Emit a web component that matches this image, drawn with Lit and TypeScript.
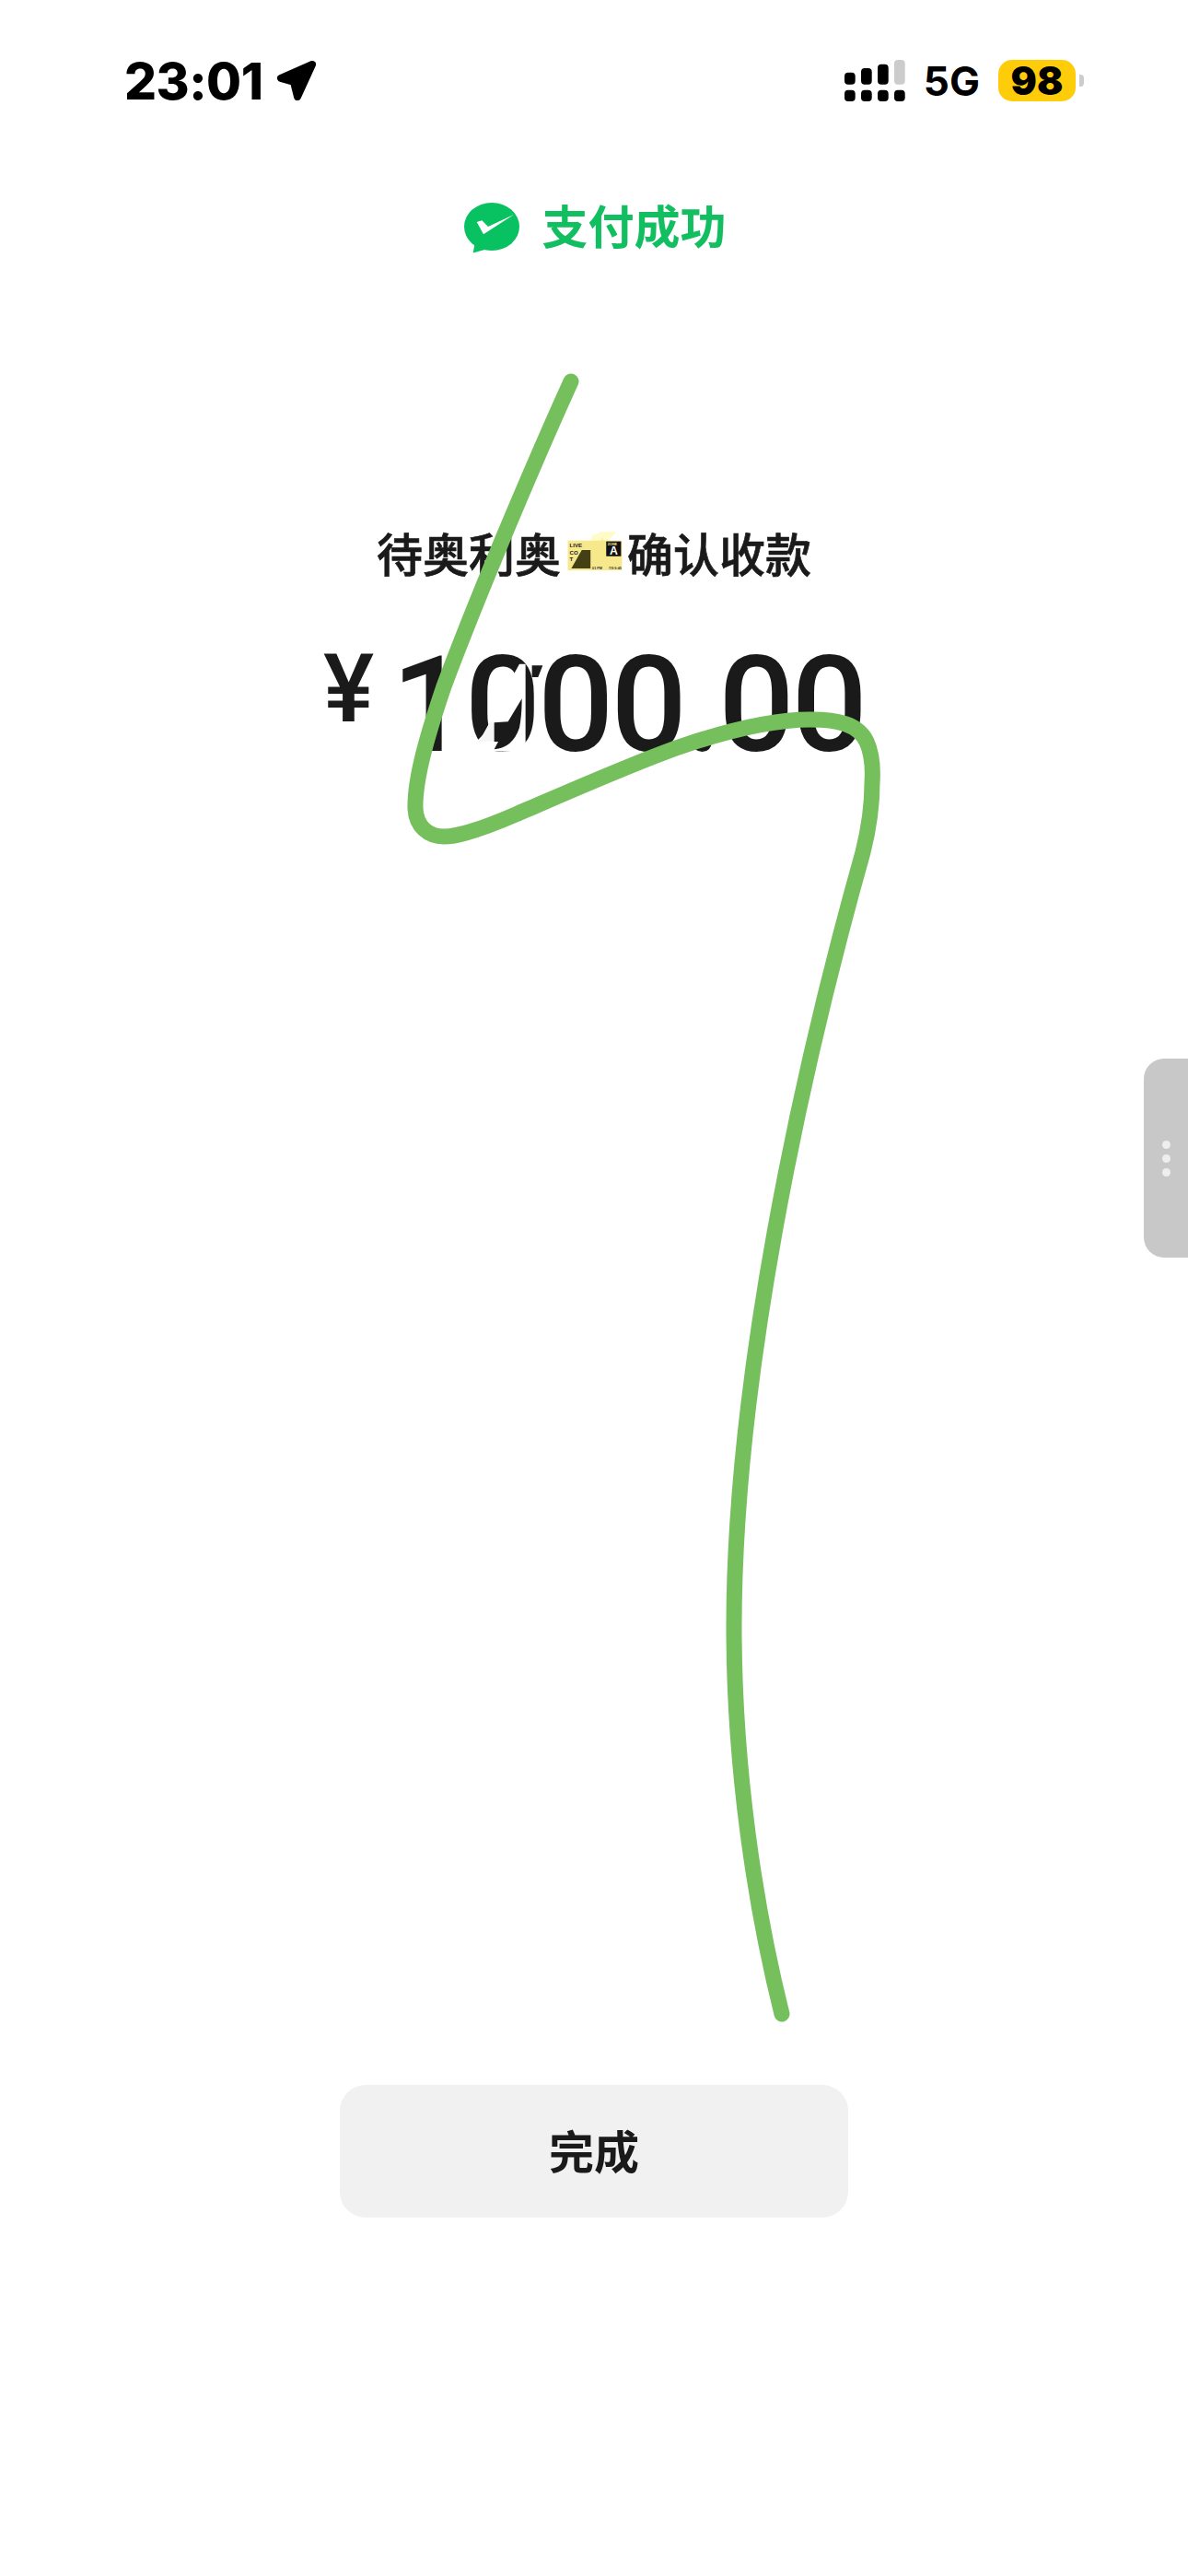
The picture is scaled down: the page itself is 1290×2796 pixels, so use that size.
import { LitElement, html, css, svg } from "lit";
import { customElement } from "lit/decorators.js";

const STROKE_PATH =
  "M620 414C590 480 525 630 482 745C465 795 450 845 451 878C452 897 465 908 482 908" +
  "C500 908 530 897 560 884C600 867 690 827 740 810C790 793 840 781 880 781" +
  "C910 781 932 786 941 805C947 818 948 835 947 850C947 875 944 897 937 925" +
  "C868 1170 797 1500 797 1766C797 1920 820 2070 849 2186";

@customElement("app-root")
export class AppRoot extends LitElement {
  static styles = css`
    :host {
      display: block;
      position: relative;
      width: 1290px;
      height: 2796px;
      background: #fff;
      overflow: hidden;
      font-family: "Noto Sans CJK SC", "Noto Sans", sans-serif;
      color: #1a1a1a;
    }
    .status {
      height: 176px;
      display: flex;
      align-items: center;
      justify-content: space-between;
      padding: 0 113px 0 135px;
      box-sizing: border-box;
      color: #000;
      font-family: Inter, sans-serif;
    }
    .left, .right { display: flex; align-items: center; }
    .time { font-size: 55px; font-weight: 800; line-height: 66px; letter-spacing: -0.5px; }
    .arrow { width: 46px; height: 46px; margin-left: 15px; margin-top: -2px; }
    .signal { width: 66px; height: 45px; margin-top: -1px; }
    .net { font-size: 44px; font-weight: 650; line-height: 50px; margin-left: 20px; }
    .battery { display: flex; align-items: center; margin-left: 20px; margin-top: -1px; }
    .level {
      width: 84px; height: 45px; border-radius: 15px; background: #ffcc0a;
      font-size: 42px; font-weight: 900; line-height: 45px; text-align: center;
    }
    .nub { width: 5px; height: 13px; margin-left: 4px; background: #ccc; border-radius: 0 4px 4px 0; }
    .head {
      display: flex; justify-content: center; align-items: center; gap: 25px;
      margin-top: 42px; height: 56px; color: #11bf60;
      font-size: 50px; font-weight: 700; line-height: 56px;
    }
    .logo { width: 60px; height: 56px; margin-top: 4px; margin-left: 2px; }
    .head span { margin-top: -6px; }
    .title {
      display: flex; justify-content: center; align-items: center;
      margin-top: 300px; height: 50px; font-size: 50px; font-weight: 500; line-height: 50px;
      -webkit-text-stroke: 0.7px #1a1a1a;
    }
    .sticker { width: 72px; height: 50px; }
    .amount {
      display: flex; justify-content: center; align-items: flex-start;
      margin-top: 78px; height: 120px; font-family: Roboto, sans-serif; font-weight: 550;
    }
    .yen { font-size: 104px; line-height: 104px; margin-top: -6px; margin-right: 19px; }
    .num { font-size: 145px; line-height: 120px; letter-spacing: -3px; margin-top: 3px; }
    .spacer { height: 1441px; }
    .done {
      width: 552px; height: 144px; margin: 0 auto; border-radius: 28px; background: #f1f1f1;
      display: flex; align-items: center; justify-content: center; box-sizing: border-box; padding-bottom: 5px;
      font-size: 49px; font-weight: 700; line-height: 60px;
    }
    .handle {
      position: absolute; right: 0; top: 1149px; width: 48px; height: 216px;
      border-radius: 22px 0 0 22px; background: #c8c8c8;
      display: flex; flex-direction: column; gap: 6px; align-items: center; justify-content: center;
    }
    .handle i { width: 9px; height: 9px; border-radius: 50%; background: #eee; }
    .ink { position: absolute; left: 0; top: 0; width: 1290px; height: 2796px; pointer-events: none; }
  `;

  render() {
    return html`
      <div class="status">
        <div class="left">
          <span class="time">23:01</span>
          <svg class="arrow" viewBox="0 0 46 46">
            <path d="M39 6L5 21L19 25L23 41Z" fill="#000" stroke="#000" stroke-width="8" stroke-linejoin="round" />
          </svg>
        </div>
        <div class="right">
          <svg class="signal" viewBox="0 0 66 45">
            <rect x="0" y="13.7" width="11.7" height="13" rx="4" />
            <rect x="18" y="9" width="11.7" height="17.7" rx="4" />
            <rect x="36" y="4.7" width="11.7" height="22" rx="4" />
            <rect x="54" y="0" width="11.7" height="26.7" rx="4" fill="#ccc" />
            <rect x="0" y="32.7" width="11.7" height="12.3" rx="4" />
            <rect x="18" y="32.7" width="11.7" height="12.3" rx="4" />
            <rect x="36" y="32.7" width="11.7" height="12.3" rx="4" />
            <rect x="54" y="32.7" width="11.7" height="12.3" rx="4" />
          </svg>
          <span class="net">5G</span>
          <div class="battery"><div class="level">98</div><div class="nub"></div></div>
        </div>
      </div>
      <div class="head">
        <svg class="logo" viewBox="0 0 60 56">
          <ellipse cx="30" cy="26" rx="30" ry="26" fill="#08c160" />
          <path d="M12 42L9.7 54.5L26 50Z" fill="#08c160" />
          <path d="M13.7 21L19.3 19.3L26 26L54.3 12.7L21 34.3Z" fill="#fff" />
        </svg>
        <span>支付成功</span>
      </div>
      <div class="title">
        <span>待奥利奥</span>
        <svg class="sticker" viewBox="0 0 76 50" font-family="Liberation Sans, sans-serif" font-weight="700" stroke="none">
          <path d="M44 2H64L52 14H38Z" fill="#fffbc6" />
          <path d="M8 12H38L48 4V12H70V46H8Z" fill="#f8e88c" />
          <path d="M36 6L52 2L46 12H34Z" fill="#fffbc6" />
          <text x="10" y="20" font-size="6.5" fill="#222">LIVE</text>
          <text x="10" y="28" font-size="6.5" fill="#222">CO</text>
          <text x="10" y="36" font-size="6.5" fill="#222">T</text>
          <path d="M24 23H34V44H12Z" fill="#453f15" />
          <text x="36" y="45" font-size="4" fill="#333">01 PM</text>
          <text x="55" y="45" font-size="4" fill="#333">7/9 9:45</text>
          <rect x="52" y="13" width="17" height="17" fill="#111" />
          <text x="53.5" y="17.5" font-size="4" fill="#f8e88c">ZONE</text>
          <text x="56" y="28.5" font-size="13" fill="#fff">A</text>
        </svg>
        <span>确认收款</span>
      </div>
      <div class="amount">
        <span class="yen">¥</span>
        <span class="num">1000.00</span>
      </div>
      <div class="spacer"></div>
      <div class="done">完成</div>
      <div class="handle"><i></i><i></i><i></i></div>
      <svg class="ink" viewBox="0 0 1290 2796">
        ${svg`
          <path transform="translate(340 690) scale(.3333)" d="M672 92L632 165L558 318L525 352L545 376L692 378L692 92Z" fill="#fff" />
          <path transform="translate(340 690) scale(.3333)" d="M540 345L575 283L590 283L590 343Z" fill="#f6f6f6" />
          <path transform="translate(340 690) scale(.3333)" d="M680 205L635 280L590 283L590 345L603 345L590 370Q650 365 672 300Q680 260 680 205Z" fill="#1a1a1a" />
          <path transform="translate(340 690) scale(.3333)" d="M713 97L748 97L733 135L713 135Z" fill="#1a1a1a" />
          <path d=${STROKE_PATH} fill="none" stroke="#75bf5d" stroke-width="17" stroke-linecap="round" stroke-linejoin="round" />
        `}
      </svg>
    `;
  }
}
